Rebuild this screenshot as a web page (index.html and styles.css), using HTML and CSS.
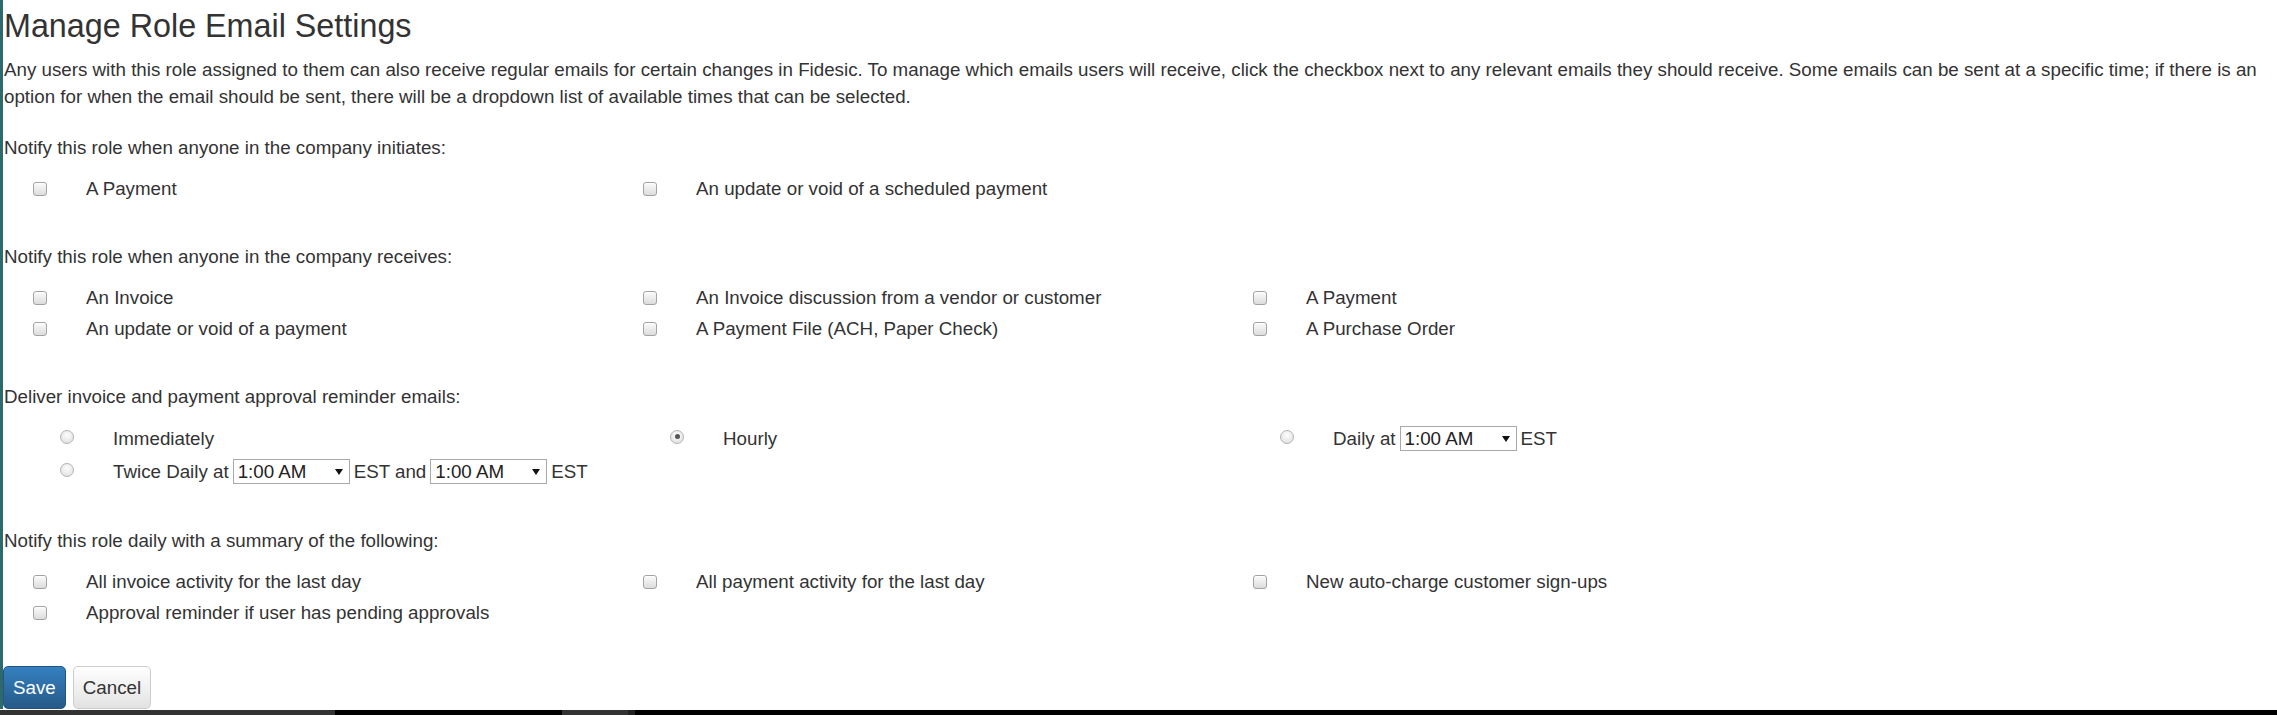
FILE: index.html
```html
<!DOCTYPE html>
<html lang="en">
<head>
<meta charset="utf-8">
<title>Manage Role Email Settings</title>
<link rel="stylesheet" href="styles.css">
</head>
<body>
<div class="page">
  <main class="content">
    <h1 class="title">Manage Role Email Settings</h1>
    <p class="intro">Any users with this role assigned to them can also receive regular emails for certain changes in Fidesic. To manage which emails users will receive, click the checkbox next to any relevant emails they should receive. Some emails can be sent at a specific time; if there is an option for when the email should be sent, there will be a dropdown list of available times that can be selected.</p>

    <section class="section first">
      <div class="heading">Notify this role when anyone in the company initiates:</div>
      <div class="options">
        <label class="check"><span class="box"></span><span>A Payment</span></label>
        <label class="check"><span class="box"></span><span>An update or void of a scheduled payment</span></label>
      </div>
    </section>

    <section class="section">
      <div class="heading">Notify this role when anyone in the company receives:</div>
      <div class="options">
        <label class="check"><span class="box"></span><span>An Invoice</span></label>
        <label class="check"><span class="box"></span><span>An Invoice discussion from a vendor or customer</span></label>
        <label class="check"><span class="box"></span><span>A Payment</span></label>
        <label class="check"><span class="box"></span><span>An update or void of a payment</span></label>
        <label class="check"><span class="box"></span><span>A Payment File (ACH, Paper Check)</span></label>
        <label class="check"><span class="box"></span><span>A Purchase Order</span></label>
      </div>
    </section>

    <section class="section">
      <div class="heading">Deliver invoice and payment approval reminder emails:</div>
      <div class="options radios">
        <label class="radio"><span class="dot"></span><span>Immediately</span></label>
        <label class="radio"><span class="dot checked"></span><span>Hourly</span></label>
        <label class="radio"><span class="dot"></span><span>Daily at</span><span class="select"><span>1:00 AM</span><span class="caret"></span></span><span>EST</span></label>
        <label class="radio"><span class="dot"></span><span>Twice Daily at</span><span class="select"><span>1:00 AM</span><span class="caret"></span></span><span>EST and</span><span class="select"><span>1:00 AM</span><span class="caret"></span></span><span>EST</span></label>
      </div>
    </section>

    <section class="section">
      <div class="heading">Notify this role daily with a summary of the following:</div>
      <div class="options">
        <label class="check"><span class="box"></span><span>All invoice activity for the last day</span></label>
        <label class="check"><span class="box"></span><span>All payment activity for the last day</span></label>
        <label class="check"><span class="box"></span><span>New auto-charge customer sign-ups</span></label>
        <label class="check"><span class="box"></span><span>Approval reminder if user has pending approvals</span></label>
      </div>
    </section>

    <div class="actions">
      <button class="btn btn-primary" type="button">Save</button>
      <button class="btn btn-default" type="button">Cancel</button>
    </div>
  </main>
  <div class="taskbar">
    <span class="seg seg-a"></span>
    <span class="seg seg-b"></span>
    <span class="seg seg-c"></span>
    <span class="seg seg-d"></span>
    <span class="seg seg-e"></span>
  </div>
</div>
</body>
</html>
```

FILE: styles.css
```css
html, body {
  margin: 0;
  padding: 0;
  background: #fff;
  overflow: hidden;
}

body {
  font-family: "Liberation Sans", Arial, Helvetica, sans-serif;
  font-size: 18.75px;
  line-height: 27px;
  color: #333;
}

.page {
  width: 2277px;
  height: 715px;
  display: flex;
  flex-direction: column;
}

.content {
  flex: 1;
  border-left: 3px solid #2d6a6b;
  padding-left: 1px;
  display: flex;
  flex-direction: column;
}

.title {
  margin: 8px 0 0;
  font-size: 32.3px;
  line-height: 36px;
  font-weight: 500;
  color: #333;
}

.intro {
  margin: 12px 0 0;
  padding-right: 2px;
}

.section {
  margin-top: 39px;
}

.section.first {
  margin-top: 24px;
}

.heading {
  margin-bottom: 12px;
}

.options {
  display: grid;
  grid-template-columns: repeat(3, 610px);
  grid-auto-rows: 31px;
}

.options.radios {
  grid-auto-rows: 33px;
}

.check, .radio {
  display: flex;
  align-items: center;
  white-space: nowrap;
}

.box {
  width: 12px;
  height: 12px;
  margin-left: 29px;
  margin-right: 39px;
  border: 1px solid #a3a3a3;
  border-radius: 3px;
  background: linear-gradient(#fbfbfb, #dcdcdc);
  box-shadow: inset 0 1px 0 #fff;
  flex: none;
}

.dot {
  width: 12px;
  height: 12px;
  margin-left: 56px;
  margin-right: 39px;
  margin-bottom: 4px;
  border: 1px solid #b3b3b3;
  border-radius: 50%;
  background: radial-gradient(circle at 50% 35%, #fdfdfd, #dcdcdc);
  flex: none;
  display: flex;
  align-items: center;
  justify-content: center;
}

.dot.checked::after {
  content: "";
  width: 5px;
  height: 5px;
  border-radius: 50%;
  background: #555;
}

.select {
  display: inline-flex;
  align-items: center;
  justify-content: space-between;
  box-sizing: border-box;
  width: 117px;
  height: 25px;
  margin: 0 4px;
  padding: 0 6px 0 4px;
  border: 1px solid #a9a9a9;
  background: #fff;
  color: #222;
  line-height: 23px;
}

.caret {
  width: 0;
  height: 0;
  border-left: 4px solid transparent;
  border-right: 4px solid transparent;
  border-top: 6px solid #111;
}

.actions {
  margin-top: 38px;
  margin-left: -1px;
  display: flex;
  gap: 7px;
}

.btn {
  font-family: inherit;
  font-size: 18.75px;
  line-height: 27px;
  padding: 7px 9px;
  border-radius: 5px;
  border: 1px solid;
  cursor: pointer;
}

.btn-primary {
  color: #fff;
  background: linear-gradient(#3580c0, #265a88);
  border-color: #245580;
}

.btn-default {
  color: #333;
  background: linear-gradient(#fff, #e2e2e2);
  border-color: #ccc;
}

.taskbar {
  height: 5px;
  margin-top: 1px;
  display: flex;
  background: #000;
}

.seg { display: block; height: 5px; }
.seg-a { width: 335px; background: #333; }
.seg-b { width: 227px; background: #000; }
.seg-c { width: 66px; background: #333; }
.seg-d { width: 7px; background: #222; }
.seg-e { flex: 1; background: #000; }
```
